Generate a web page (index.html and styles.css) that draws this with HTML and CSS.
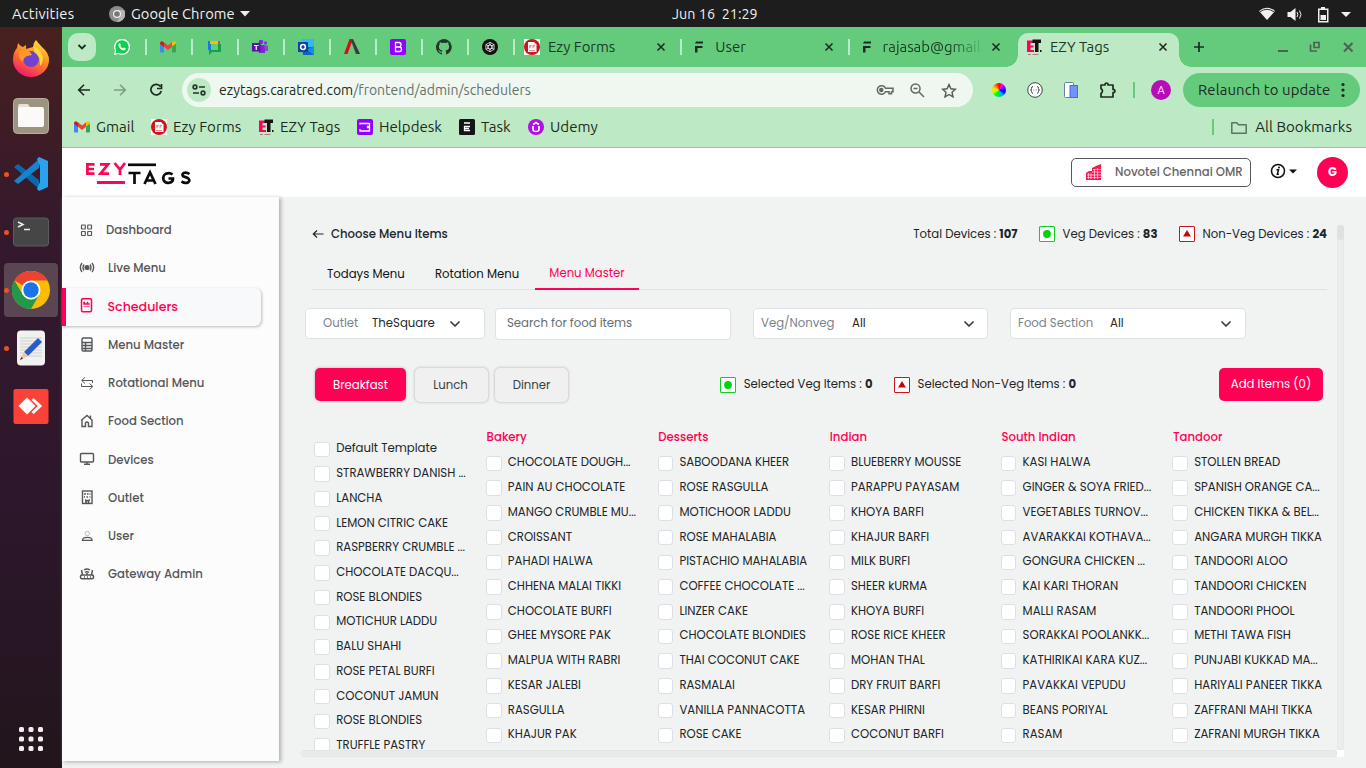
FILE: index.html
```html
<!DOCTYPE html>
<html lang="en">
<head>
<meta charset="utf-8">
<title>EZY Tags</title>
<link rel="stylesheet" href="styles.css">
</head>
<body>
<svg class="defs" width="0" height="0">
  <symbol id="gmail" viewBox="0 0 16 16"><path fill="#4285f4" d="M1 13.5h3V7L0 4v8.500q0 1 1 1z"/><path fill="#34a853" d="M12 13.500h3q1 0 1-1V4l-4 3z"/><path fill="#fbbc04" d="M12 3.500V7.500l4-3V4q-.5-2.500-2.500-1.500z"/><path fill="#c5221f" d="M0 4v1l4 3V3.500L2.500 2.500Q.5 1.800 0 4z"/><path fill="#ea4335" d="M4 3.300 8 6.500l4-3.200v4.400L8 11 4 7.700z"/></symbol>
  <symbol id="ezyforms" viewBox="0 0 16 16"><path fill="#fff" d="M0 0h16v16H0z"/><circle cx="8" cy="8" r="8" fill="#c9151b"/><path fill="#fff" d="M4 3h6l2.500 2.500V13H4z"/><path stroke="#e46a6e" fill="none" stroke-width=".8" d="M5.800 6v3.500m0-3.200h2m-2 1.500h1.500M9 6v3.500m0-3.200h2m-2 1.500h1.500M5 11.500h6"/></symbol>
  <symbol id="ezytags" viewBox="0 0 16 16"><path fill="#f5065a" d="M1 1.500h7V4H4.500v2.500h3v2h-3V11H8v2H1z"/><path fill="#151515" d="M6.500 .5H15V4h-2.500v9H9V4H6.500zM14 11h1.500v2H14z"/><path stroke="#b37a86" d="M2 15.500h3m1.500 0h6"/></symbol>
  <symbol id="effe" viewBox="0 0 16 16"><path fill="#1e2b25" d="M5 2.500h7v2H4zM4 7h7.500v2H6.500v4.500H4z"/></symbol>
  <symbol id="close" viewBox="0 0 10 10"><path d="m1.500 1.500 7 7m0-7-7 7" stroke="currentColor" stroke-width="1.600" fill="none"/></symbol>
  <symbol id="chev" viewBox="0 0 12 8"><path d="m2 2 4 4 4-4" stroke="#343a40" stroke-width="1.700" fill="none" stroke-linecap="round" stroke-linejoin="round"/></symbol>
  <symbol id="veg" viewBox="0 0 16 16"><rect x=".5" y=".5" width="15" height="15" rx=".5" fill="#fff" stroke="#12ce22"/><circle cx="8" cy="8" r="3.900" fill="#00d20c"/></symbol>
  <symbol id="nonveg" viewBox="0 0 16 16"><rect x=".5" y=".5" width="15" height="15" rx=".5" fill="#fff" stroke="#c9151b"/><path d="M8 4l4 6.500H4z" fill="#c80404"/></symbol>
</svg>

<div class="desktop">
<header class="topbar">
  <span class="activities">Activities</span>
  <svg class="app-ico" width="16" height="16" viewBox="0 0 16 16"><circle cx="8" cy="8" r="8" fill="#8d8d8d"/><path d="M8 4h7.200A8 8 0 0 1 8 16l3.500-6z" fill="#b5b5b5"/><circle cx="8" cy="8" r="4" fill="#eee"/><circle cx="8" cy="8" r="2.800" fill="#777"/></svg>
  <span class="app-name">Google Chrome</span>
  <svg width="10" height="6" viewBox="0 0 10 6"><path d="M0 0h10L5 5.500z" fill="#eee"/></svg>
  <span class="clock">Jun 16&nbsp; 21:29</span>
  <svg class="tray" width="92" height="20" viewBox="0 0 92 20"><g fill="#f0f0f0"><path d="M0 7q8-6.500 16 0l-8 9z"/><path d="M28.500 8h3l5-4v13l-5-4h-3z"/><path d="M59 4.500h3V3h4v1.500h3.500v14H59zm1.500 1.500v11H68V6z" fill-rule="evenodd"/><path d="M61.500 11H67v5h-5.500z"/><path d="M82 8h10l-5 5z"/></g><path d="M1 7.800q7-5 14 0" stroke="#333" fill="none"/><path d="M38 8q1.800 2.500 0 5M40.500 6.500q3 4 0 8" stroke="#eee" fill="none"/></svg>
</header>

<div class="work">
<nav class="dock">
  <div class="slot"><svg width="38" height="38" viewBox="0 0 38 38"><defs><linearGradient id="ff" x1=".8" y1="0" x2=".3" y2="1"><stop offset="0" stop-color="#ffe53b"/><stop offset=".45" stop-color="#ff8a1e"/><stop offset="1" stop-color="#f5156c"/></linearGradient></defs><path fill="url(#ff)" d="M24 1q2 3 6 7 7 6 7 13A18 17 0 0 1 1 21Q1 13 5 9l1-5q2 3 5 4l3-2 0 4 7-2Q21 4 24 1z"/><circle cx="19" cy="20" r="8" fill="#7142cf"/><path fill="#ff9a2a" d="M7 12q8-2 11 1l2 3-5 1q-4 2-4 6-5-3-4-11z"/><path fill="#ffd83a" d="M22 7q8 5 9 12 0 5-3 8 1-10-6-14z"/></svg></div>
  <div class="slot"><svg width="38" height="38" viewBox="0 0 38 38"><rect x="1.500" y="1.500" width="35" height="35" rx="4" fill="#9b9482" stroke="#b6b09e"/><path d="M6 12V9q0-2 2-2h8l2 3h13v20H6z" fill="#e5e1d8"/><rect x="6" y="10" width="26" height="20" rx="2.500" fill="#fbfaf8"/></svg></div>
  <div class="slot run"><svg width="38" height="38" viewBox="0 0 38 38"><path fill="#0c68ad" d="M2 12l4-3 21 16v9z"/><path fill="#1683ca" d="M2 26l4 3 21-16V4z"/><path fill="#2aa2ed" d="M27 2l9 4v26l-9 4-2-2 3-7V11l-3-7z"/></svg></div>
  <div class="slot run"><svg width="38" height="38" viewBox="0 0 38 38"><rect x="1.500" y="5" width="35" height="28" rx="3" fill="#464646" stroke="#5c5c5c"/><path d="m6 9 5 2.500L6 14m6 2.500h6" stroke="#eee" stroke-width="1.500" fill="none"/></svg></div>
  <div class="slot run active"><svg width="38" height="38" viewBox="0 0 38 38"><circle cx="19" cy="19" r="19" fill="#fbbc05"/><path d="M19 19 2.500 9.500A19 19 0 0 1 35.500 9.500H19z" fill="#ea4335"/><path d="M2.500 9.500 10.800 23.800 19 28.500 27.200 23.800 19 38A19 19 0 0 1 2.500 9.500z" fill="#23984b"/><circle cx="19" cy="19" r="9.500" fill="#fff"/><circle cx="19" cy="19" r="7.700" fill="#1a73e8"/></svg></div>
  <div class="slot run"><svg width="38" height="38" viewBox="0 0 38 38"><rect x="5" y="1.500" width="28" height="35" rx="4" fill="#f1f1f0"/><path d="M8 9h22M8 12h22M8 15h22M8 18h22M8 21h22M8 24h22M8 27h22" stroke="#cfcfcf"/><path d="m12 23 14-14 4 4-14 14z" fill="#295cc8"/><path d="m8 31 4-8 4 4z" fill="#edc9a0"/><path d="m8 31 1.500-3 1.500 1.500z" fill="#222"/></svg></div>
  <div class="slot"><svg width="38" height="38" viewBox="0 0 38 38"><rect x="1.500" y="2" width="35" height="35" rx="2" fill="#fb4238"/><path d="m6.500 19 8.500-8.500 8.500 8.500-8.500 8.500z" fill="#fff"/><path d="m20.500 12 7.500 7-7.500 7" stroke="#fff" stroke-width="3" fill="none"/></svg></div>
  <svg class="grid" width="24" height="24" viewBox="0 0 24 24" fill="#f0efee"><rect width="5" height="5" rx="1.500"/><rect x="9.500" width="5" height="5" rx="1.500"/><rect x="19" width="5" height="5" rx="1.500"/><rect y="9.500" width="5" height="5" rx="1.500"/><rect x="9.500" y="9.500" width="5" height="5" rx="1.500"/><rect x="19" y="9.500" width="5" height="5" rx="1.500"/><rect y="19" width="5" height="5" rx="1.500"/><rect x="9.500" y="19" width="5" height="5" rx="1.500"/><rect x="19" y="19" width="5" height="5" rx="1.500"/></svg>
</nav>

<div class="browser">
<div class="tabs">
  <button class="tabsearch"><svg width="10" height="8" viewBox="0 0 10 8"><path d="m1.500 2 3.500 3.500L8.500 2" stroke="#1c2b21" stroke-width="1.800" fill="none"/></svg></button>
  <div class="pin first"><svg width="16" height="16" viewBox="0 0 16 16"><path d="M0 16l1-4.500A8 8 0 1 1 4.500 15z" fill="#fff"/><circle cx="8" cy="8" r="6.700" fill="#0cd04e"/><path d="M1.300 14.700 2.500 11l2.500 2.700z" fill="#0cd04e"/><path d="M5.500 4.200q.8-.3 1.300 1.500L6.300 7q1 1.800 2.700 2.300l1-.9 1.900 1.200q-.4 2-2.400 1.800Q5 10.500 4.300 6q.3-1.400 1.200-1.800z" fill="#fff"/></svg></div>
  <div class="pin"><svg width="16" height="16"><use href="#gmail"/></svg></div>
  <div class="pin"><svg width="16" height="16" viewBox="0 0 16 16"><path fill="#1b74e8" d="M2 2h3v9H2z"/><path fill="#fbbc04" d="M4 2h8v3H4z"/><path fill="#ea4335" d="M12 2h2v3h-2z"/><path fill="#0fa44a" d="M12 5h3v8H6l-3 3v-5h9z"/><path fill="#64cb7c" d="M5 5h7v6H5z"/></svg></div>
  <div class="pin"><svg width="16" height="16" viewBox="0 0 16 16"><circle cx="9" cy="3" r="2.300" fill="#7a30d8"/><circle cx="13.500" cy="4" r="1.700" fill="#8a35e0"/><path fill="#7a28c8" d="M5 6h8v8H7z"/><path fill="#9440e0" d="M12 6.500h4V12h-3z"/><path fill="#5a14a8" d="M0 4h8.500v8.500H0z"/><path d="M2 6.500h4.500M4.250 6.500V11" stroke="#fff" stroke-width="1.200"/></svg></div>
  <div class="pin"><svg width="16" height="16" viewBox="0 0 16 16"><path fill="#35b8f1" d="M4 0h12v9H4z"/><path fill="#1066b5" d="M4 8h12v8H5z"/><path fill="#1390e0" d="M16 7v9l-7-5z"/><path fill="#123fa7" d="M0 3h10v10H0z"/><circle cx="5" cy="8" r="2.400" fill="none" stroke="#fff" stroke-width="1.500"/></svg></div>
  <div class="pin"><svg width="16" height="16" viewBox="0 0 16 16"><path fill="#d31018" d="M5.500 0H9L3.500 15H0z"/><path fill="#3b3b3b" d="M7 1.500 9 0l7 15h-4z"/></svg></div>
  <div class="pin"><svg width="16" height="16" viewBox="0 0 16 16"><rect width="16" height="16" rx="2" fill="#8f00ff"/><path d="M5.500 3.500h3.500q2 0 2 2.200T9 8H5.500zM5.500 8h4q2 0 2 2.300t-2 2.200h-4z" fill="none" stroke="#fff" stroke-width="1.300"/></svg></div>
  <div class="pin"><svg width="16" height="16" viewBox="0 0 16 16"><path fill="#24352c" d="M8 0a8 8 0 0 0-2.530 15.590c.4.070.55-.17.55-.38v-1.490C3.800 14.200 3.330 12.650 3.330 12.650c-.36-.92-.89-1.170-.89-1.170-.73-.5.060-.49.060-.49.800.060 1.230.820 1.230.820.710 1.220 1.870.870 2.330.670.070-.52.280-.87.500-1.070C4.780 11.200 2.920 10.520 2.920 7.460c0-.87.310-1.590.820-2.150-.080-.2-.360-1.020.080-2.120 0 0 .67-.21 2.200.82a7.600 7.600 0 0 1 4 0c1.530-1.040 2.200-.82 2.200-.82.440 1.100.16 1.920.080 2.120.510.560.820 1.270.820 2.150 0 3.070-1.870 3.750-3.650 3.950.290.250.540.730.540 1.480v2.200c0 .210.150.460.550.380A8 8 0 0 0 8 0z"/></svg></div>
  <div class="pin last"><svg width="16" height="16" viewBox="0 0 16 16"><circle cx="8" cy="8" r="8" fill="#111"/><g fill="none" stroke="#eee" stroke-width=".8"><path d="M8 3.300 12.100 5.650v4.700L8 12.700 3.900 10.350v-4.700z"/><path d="M8 5.700 10 6.850v2.300L8 10.300 6 9.150v-2.300zM8 3.300v2.400l-2 1.150M12.100 5.650 10 6.850 8 5.700M12.100 10.350 10 9.150v-2.300M8 12.700v-2.400l2-1.150M3.900 10.350 6 9.150l2 1.150M3.900 5.650 6 6.850v2.300"/></g></svg></div>
  <div class="tab"><svg width="16" height="16"><use href="#ezyforms"/></svg><span>Ezy Forms</span><svg class="x" width="10" height="10"><use href="#close"/></svg></div>
  <div class="tab"><svg width="16" height="16"><use href="#effe"/></svg><span>User</span><svg class="x" width="10" height="10"><use href="#close"/></svg></div>
  <div class="tab before-on"><svg width="16" height="16"><use href="#effe"/></svg><span class="fade">rajasab@gmail</span><svg class="x" width="10" height="10"><use href="#close"/></svg></div>
  <div class="tab on"><svg width="16" height="16"><use href="#ezytags"/></svg><span>EZY Tags</span><svg class="x" width="10" height="10"><use href="#close"/></svg></div>
  <svg class="plus" width="12" height="12" viewBox="0 0 12 12"><path d="M6 1v10M1 6h10" stroke="#1f2a22" stroke-width="1.700"/></svg>
  <svg class="win" width="76" height="12" viewBox="0 0 76 12" fill="none" stroke="#4c6353" stroke-width="2"><path d="M0 10h10"/><path d="M36 1.500h5v5h-5zM32.500 3.500v6.500h6.500" stroke-width="1.700"/><path d="m66 2 8.500 8.500m0-8.500L66 10.500"/></svg>
</div>

<div class="toolbar">
  <svg class="navs" width="88" height="16" viewBox="0 0 88 16" fill="none" stroke-width="1.600"><path d="M13 8H2m5-5.300L1.700 8 7 13.300" stroke="#1f2a22"/><path d="M37 8h11m-5-5.300L48.300 8 43 13.300" stroke="#7b9d82"/><path d="M83.500 4.500A5.300 5.300 0 1 0 84.300 9M84.500 2v4.500H80" stroke="#1f2a22" stroke-width="1.700"/></svg>
  <div class="omni">
    <span class="site"><svg width="14" height="12" viewBox="0 0 14 12" fill="none" stroke="#26352a" stroke-width="1.600"><circle cx="3" cy="3" r="1.900"/><path d="M7 3h6M1 9h6"/><circle cx="11" cy="9" r="1.900"/></svg></span>
    <span class="url">ezytags.caratred.com<b>/frontend/admin/schedulers</b></span>
    <svg width="18" height="12" viewBox="0 0 18 12" fill="none" stroke="#5f6b63" stroke-width="1.500"><path d="M9.500 4.200A4.300 4.300 0 1 0 9.500 7.800H13v2h2.500v-2H17V4.200z"/><circle cx="5.300" cy="6" r="1.500" fill="#5f6b63"/></svg>
    <svg width="15" height="15" viewBox="0 0 15 15" fill="none" stroke="#5f6b63" stroke-width="1.500"><circle cx="5.500" cy="5.500" r="4.500"/><path d="m9 9 5 5M3.500 5.500h4"/></svg>
    <svg width="16" height="15" viewBox="0 0 16 15"><path d="m8 1.500 1.900 4.300 4.600.4-3.500 3.100 1 4.600L8 11.500l-4 2.400 1-4.600L1.500 6.200l4.600-.4z" fill="none" stroke="#4d5b51" stroke-width="1.400"/></svg>
  </div>
  <i class="wheel"></i>
  <svg class="e2" width="16" height="16" viewBox="0 0 16 16" fill="none" stroke="#444"><circle cx="8" cy="8" r="7.300" fill="#fff"/><path d="M6 4.500Q4.500 4.500 4.500 6.500T3.500 8q1 0 1 1.500T6 11.500M10 4.500q1.500 0 1.500 2t1 1.500q-1 0-1 1.500T10 11.500M6.500 8h.8m1.500 0h.8"/></svg>
  <svg class="e3" width="14" height="16" viewBox="0 0 14 16"><rect x=".5" y=".5" width="9" height="15" rx="1" fill="#fff" stroke="#708099"/><rect x="6" y="3.500" width="7.500" height="12" fill="#6f94ff" stroke="#4d6bd8"/></svg>
  <svg class="e4" width="18" height="18" viewBox="0 0 18 18"><path d="M2 4h4V3q1.500-2 3 0v1h5v4.500h1q2 1.500 0 3h-1V16H2v-3.500q3-2.500 0-5z" fill="none" stroke="#1f2a22" stroke-width="1.700" stroke-linejoin="round"/></svg>
  <i class="bar"></i>
  <span class="me">A</span>
  <button class="relaunch"><span>Relaunch to update</span><svg width="4" height="16" viewBox="0 0 4 16" fill="#1f2a22"><circle cx="2" cy="2.500" r="1.600"/><circle cx="2" cy="8" r="1.600"/><circle cx="2" cy="13.500" r="1.600"/></svg></button>
</div>

<div class="bookmarks">
  <span class="bm b1"><svg width="16" height="16"><use href="#gmail"/></svg><span>Gmail</span></span>
  <span class="bm b2"><svg width="16" height="16"><use href="#ezyforms"/></svg><span>Ezy Forms</span></span>
  <span class="bm b3"><svg width="16" height="16"><use href="#ezytags"/></svg><span>EZY Tags</span></span>
  <span class="bm b4"><svg width="16" height="16" viewBox="0 0 16 16"><rect width="16" height="16" rx="2" fill="#8f00ff"/><path d="M3 5.500V4.500h9.500v3h-2v1h2v3.500H3v-2" fill="none" stroke="#fff" stroke-width="1.300"/></svg><span>Helpdesk</span></span>
  <span class="bm b5"><svg width="16" height="16" viewBox="0 0 16 16"><rect width="16" height="16" rx="1.500" fill="#151515"/><path d="M5 4h6M11 7.500H5.500v4H11M5.500 9.500H10" fill="none" stroke="#fff" stroke-width="1.300"/></svg><span>Task</span></span>
  <span class="bm b6"><svg width="16" height="16" viewBox="0 0 16 16"><circle cx="8" cy="8" r="8" fill="#b10de8"/><path d="M5 7v3.500q0 2 3 2t3-2V7M5 5.500 8 3.500l3 2" fill="none" stroke="#fff" stroke-width="1.600"/></svg><span>Udemy</span></span>
  <i class="bar"></i>
  <span class="bm all"><svg width="16" height="13" viewBox="0 0 16 13"><path d="M.8 11V1.800h5l1.700 2h7.700v8.400H.8z" fill="none" stroke="#5b7462" stroke-width="1.500" stroke-linejoin="round"/></svg><span>All Bookmarks</span></span>
</div>

<div class="page">
<header class="head">
  <svg class="logo" width="106" height="24" viewBox="0 0 106 24" fill="none" stroke-width="2.700"><g stroke="#fb0655"><path d="M9.500 2.400H2.400v9.200h7.100M2.400 7H9M15 2.400h8l-7.500 9.200H24M29.500 1l5.500 6.500L40 1M35 7v6"/><path d="M12 20.500h28" stroke-width="3"/></g><g stroke="#0b0b0b"><path d="M43 2.800h28"/><path d="M43.500 11h12M49.500 10v12M59.500 22 65 10.500 70.500 22M61.500 18.500h7"/><path d="M87.500 12.500q-3-2.500-6.500-.8-3.500 2-2.500 6 1.500 4 6 3 3.500-.5 3.500-4.200h-4.500M104.500 12q-3-2-6-.9-2 1.400-.2 3.200l4.400 1.700q3 2.300.6 4.300-3.300 1.700-6.800-.9"/></g></svg>
  <div class="hotel"><svg width="16" height="16" viewBox="0 0 16 16"><path d="M0 16V9l3-2h3V4l5-2.500L15 0v16z" fill="#f41c50"/><path d="M2.500 9v6M5 9v6M8.500 5v10M11.500 4v11M1 11h14M1 13.500h14M6 8h9M7 5.500h8" stroke="#fff" stroke-width=".6"/></svg><span>Novotel Chennai OMR</span></div>
  <svg class="info" width="28" height="16" viewBox="0 0 28 16"><circle cx="8" cy="8" r="6.500" fill="none" stroke="#111" stroke-width="1.500"/><path d="M6.500 6.800h2L7.300 11.300h1.600" fill="none" stroke="#111" stroke-width="1.500"/><circle cx="9" cy="4.400" r="1" fill="#111"/><path d="M19 6.500h8l-4 4z" fill="#111"/></svg>
  <span class="avatar">G</span>
</header>

<div class="body">
<aside class="side">
  <a class="s1"><svg width="16" height="16" viewBox="0 0 16 16" fill="none" stroke="currentColor" stroke-width="1.200"><rect x="2.500" y="2" width="3.800" height="4" rx=".5"/><rect x="8.700" y="2" width="3.800" height="4" rx=".5"/><rect x="2.500" y="8.500" width="3.800" height="4" rx=".5"/><rect x="8.700" y="8.500" width="3.800" height="4" rx=".5"/></svg>Dashboard</a>
  <a><svg width="16" height="16" viewBox="0 0 16 16" fill="none" stroke="currentColor" stroke-width="1.400"><circle cx="8" cy="6.500" r="1.900" fill="currentColor"/><path d="M5 3.500q-2 3 0 6M11 3.500q2 3 0 6M3 2q-3.300 4.500 0 9M13 2q3.300 4.500 0 9"/></svg>Live Menu</a>
  <a class="on"><svg width="16" height="16" viewBox="0 0 16 16" fill="none" stroke="currentColor" stroke-width="1.500"><rect x="2.500" y=".7" width="10" height="13" rx="1.500"/><path d="M4.500 6.500V4H6v1.500h2V4h1v1.500h1.500v1z" fill="currentColor" stroke-width=".5"/><path d="M4.500 8.500h6" stroke-width=".6"/></svg>Schedulers</a>
  <a><svg width="16" height="16" viewBox="0 0 16 16" fill="none" stroke="currentColor" stroke-width="1.400"><rect x="3" y="1" width="10" height="13" rx="1.200"/><path d="M3 5.500h10M3 8.500h10M3 11.500h10M6.500 5.500V14"/></svg>Menu Master</a>
  <a><svg width="16" height="16" viewBox="0 0 16 16" fill="none" stroke="currentColor"><path d="M13.500 7V4.500H3m3-3.200L2.700 4.500 6 7.500M2.500 7.500v3h11m-3-3 3.300 3-3.300 3.200"/></svg>Rotational Menu</a>
  <a><svg width="16" height="16" viewBox="0 0 16 16" fill="none" stroke="currentColor" stroke-width="1.400"><path d="m2 6.500 6-5 5.500 5M3 6v6.500h3.500V9q1.500-2 3 0v3.500H13V6M11.500 4V1.500"/></svg>Food Section</a>
  <a><svg width="16" height="16" viewBox="0 0 16 16" fill="none" stroke="currentColor" stroke-width="1.400"><rect x="1.500" y="1.500" width="13" height="8.500" rx="1"/><path d="M8 10v2M5 12.200h6"/></svg>Devices</a>
  <a><svg width="16" height="16" viewBox="0 0 16 16" fill="none" stroke="currentColor" stroke-width="1.400"><rect x="3.500" y="1" width="9.500" height="12.500"/><path d="M5 4h2m1 0h1.500m1 0h1M5 7h1m1.500 0H9m1.500 0h1M6 10h1m3 0h1M7 13v-2.500h2.500V13" stroke-width="1.700"/></svg>Outlet</a>
  <a><svg width="16" height="16" viewBox="0 0 16 16" fill="none" stroke="currentColor"><circle cx="8.300" cy="4.500" r="2.200" stroke="#aaa" stroke-width=".8"/><path d="M3.500 11.300q0-3 4.800-3t4.800 3z" stroke-width="1.300"/></svg>User</a>
  <a><svg width="16" height="16" viewBox="0 0 16 16" fill="none" stroke="currentColor" stroke-width="1.500"><rect x="1.500" y="8" width="13" height="3.800" rx="1.500"/><path d="M3.500 8l-1-5M12.500 8l1-5M5 3q3-2 6 0M6 5.500q2-1.500 4 0M8 6v2M5 10h1m2 0h1m2 0h1"/></svg>Gateway Admin</a>
</aside>

<main class="main">
  <div class="title">
    <svg width="12" height="10" viewBox="0 0 12 10"><path d="M11.500 5H1m4-3.500L1.300 5 5 8.500" fill="none" stroke="#212529" stroke-width="1.200"/></svg>
    <h1>Choose Menu Items</h1>
    <span class="stat">Total Devices : <b>107</b></span>
    <svg class="v" width="16" height="16"><use href="#veg"/></svg><span class="stat">Veg Devices : <b>83</b></span>
    <svg class="v" width="16" height="16"><use href="#nonveg"/></svg><span class="stat">Non-Veg Devices : <b>24</b></span>
  </div>
  <div class="menu-tabs"><span class="t1">Todays Menu</span><span class="t2">Rotation Menu</span><span class="t3">Menu Master</span></div>
  <div class="filters">
    <div class="sel outlet"><em>Outlet</em><span>TheSquare</span><svg width="12" height="8"><use href="#chev"/></svg></div>
    <div class="sel search">Search for food items</div>
    <div class="sel vn"><em>Veg/Nonveg</em><span>All</span><svg width="12" height="8"><use href="#chev"/></svg></div>
    <div class="sel fs"><em>Food Section</em><span>All</span><svg width="12" height="8"><use href="#chev"/></svg></div>
  </div>
  <div class="meals">
    <button class="meal cur">Breakfast</button><button class="meal lunch">Lunch</button><button class="meal dinner">Dinner</button>
    <div class="picked"><svg width="16" height="16"><use href="#veg"/></svg><span>Selected Veg Items : <b>0</b></span><svg class="nv" width="16" height="16"><use href="#nonveg"/></svg><span>Selected Non-Veg Items : <b>0</b></span></div>
    <button class="add">Add Items (0)</button>
  </div>
  <div class="lists">
    <ul class="nohead"><li>Default Template<li>STRAWBERRY DANISH ...<li>LANCHA<li>LEMON CITRIC CAKE<li>RASPBERRY CRUMBLE ...<li>CHOCOLATE DACQU...<li>ROSE BLONDIES<li>MOTICHUR LADDU<li>BALU SHAHI<li>ROSE PETAL BURFI<li>COCONUT JAMUN<li>ROSE BLONDIES<li>TRUFFLE PASTRY</ul>
    <ul><h2>Bakery</h2><li>CHOCOLATE DOUGH...<li>PAIN AU CHOCOLATE<li>MANGO CRUMBLE MU...<li>CROISSANT<li>PAHADI HALWA<li>CHHENA MALAI TIKKI<li>CHOCOLATE BURFI<li>GHEE MYSORE PAK<li>MALPUA WITH RABRI<li>KESAR JALEBI<li>RASGULLA<li>KHAJUR PAK</ul>
    <ul><h2>Desserts</h2><li>SABOODANA KHEER<li>ROSE RASGULLA<li>MOTICHOOR LADDU<li>ROSE MAHALABIA<li>PISTACHIO MAHALABIA<li>COFFEE CHOCOLATE ...<li>LINZER CAKE<li>CHOCOLATE BLONDIES<li>THAI COCONUT CAKE<li>RASMALAI<li>VANILLA PANNACOTTA<li>ROSE CAKE</ul>
    <ul><h2>Indian</h2><li>BLUEBERRY MOUSSE<li>PARAPPU PAYASAM<li>KHOYA BARFI<li>KHAJUR BARFI<li>MILK BURFI<li>SHEER kURMA<li>KHOYA BURFI<li>ROSE RICE KHEER<li>MOHAN THAL<li>DRY FRUIT BARFI<li>KESAR PHIRNI<li>COCONUT BARFI</ul>
    <ul><h2>South Indian</h2><li>KASI HALWA<li>GINGER &amp; SOYA FRIED...<li>VEGETABLES TURNOV...<li>AVARAKKAI KOTHAVA...<li>GONGURA CHICKEN ...<li>KAI KARI THORAN<li>MALLI RASAM<li>SORAKKAI POOLANKK...<li>KATHIRIKAI KARA KUZ...<li>PAVAKKAI VEPUDU<li>BEANS PORIYAL<li>RASAM</ul>
    <ul><h2>Tandoor</h2><li>STOLLEN BREAD<li>SPANISH ORANGE CA...<li>CHICKEN TIKKA &amp; BEL...<li>ANGARA MURGH TIKKA<li>TANDOORI ALOO<li>TANDOORI CHICKEN<li>TANDOORI PHOOL<li>METHI TAWA FISH<li>PUNJABI KUKKAD MA...<li>HARIYALI PANEER TIKKA<li>ZAFFRANI MAHI TIKKA<li>ZAFRANI MURGH TIKKA</ul>
  </div>
  <div class="hscroll"></div>
</main>
<div class="vscroll"><div class="track"><i></i></div><div class="corner"></div></div>
</div>
</div>
</div>
</div>
</div>
</body>
</html>
```

FILE: styles.css
```css
* { box-sizing: border-box; }
html, body { margin: 0; height: 100%; overflow: hidden; }
body { font-family: Poppins, Inter, sans-serif; font-size: 11.700px; color: #212529; }
svg { flex: none; display: block; }
.defs { position: absolute; }
button { font: inherit; border: 0; padding: 0; margin: 0; white-space: nowrap; flex: none; }
span, a, em, li, h1, h2 { white-space: nowrap; }
em { font-style: normal; }
i { flex: none; }

.desktop { width: 1366px; height: 768px; display: flex; flex-direction: column; overflow: hidden; }
.topbar { height: 27px; background: #1d1d1d; color: #f0f0f0; display: flex; align-items: center; font-family: Ubuntu, "Noto Sans", sans-serif; font-size: 14.700px; padding: 0 15px 0 12px; flex: none; }
.activities { width: 97px; letter-spacing: .2px; }
.app-name { margin: 0 5px 0 6px; width: 104px; letter-spacing: .05px; }
.clock { margin-left: 422px; font-size: 14.300px; letter-spacing: .05px; }
.tray { margin-left: auto; }

.work { flex: 1; display: flex; min-height: 0; }
.dock { width: 62px; flex: none; background: linear-gradient(#48201f 0, #35192c 26%, #2e172d 60%, #22151c 100%); display: flex; flex-direction: column; align-items: center; padding-top: 4px; }
.slot { width: 54px; height: 54px; margin-bottom: 4px; border-radius: 4px; display: flex; align-items: center; justify-content: center; position: relative; flex: none; }
.slot.active { background: #5a4553; }
.slot.run::before { content: ""; position: absolute; left: 0; top: 25px; width: 5px; height: 5px; border-radius: 50%; background: #e95420; }
.grid { margin-top: auto; margin-bottom: 17px; }

.browser { flex: 1; min-width: 0; display: flex; flex-direction: column; background: #bdeac4; }
.tabs { height: 40px; flex: none; background: #64cb7c; display: flex; align-items: center; padding-left: 6px; font-family: Ubuntu, "Noto Sans", sans-serif; font-size: 14.900px; color: #1b3a25; }
.tabsearch { width: 28px; height: 28px; border-radius: 10px; background: #bdeac4; display: flex; align-items: center; justify-content: center; }
.pin { width: 46px; height: 40px; display: flex; align-items: center; padding-left: 15px; position: relative; flex: none; }
.pin.first { width: 49px; padding-left: 18px; }
.pin::after, .tab:not(.on)::after { content: ""; position: absolute; right: -2px; top: 12px; width: 2px; height: 16px; background: #bdeac4; }
.tab { width: 167.300px; height: 40px; display: flex; align-items: center; position: relative; padding: 0 14px 0 11px; flex: none; }
.tab span { margin-left: 8px; flex: 1; min-width: 0; padding-bottom: 2px; }
.tab .x { margin-left: 4px; color: #1f2a22; }
.tab.on { width: 161px; height: 34px; align-self: flex-end; margin-left: 3px; background: #bdeac4; border-radius: 10px 10px 0 0; padding: 0 11px 6px 8px; }
.tab.on::before, .tab.on::after { content: ""; position: absolute; bottom: 0; width: 12px; height: 12px; background: radial-gradient(circle at 0 0, transparent 11.500px, #bdeac4 12px); }
.tab.on::before { left: -12px; }
.tab.on::after { right: -12px; background: radial-gradient(circle at 100% 0, transparent 11.500px, #bdeac4 12px); }
.tab.before-on::after { display: none; }
.fade { overflow: hidden; -webkit-mask: linear-gradient(90deg, #000 65%, transparent 98%); mask: linear-gradient(90deg, #000 65%, transparent 98%); }
.plus { margin-left: 14px; }
.win { margin-left: auto; margin-right: 12px; }

.toolbar { height: 46px; flex: none; display: flex; align-items: center; font-family: Ubuntu, "Noto Sans", sans-serif; font-size: 14px; color: #1f2a22; background: #bdeac4; padding-left: 15px; }
.omni { margin-left: 17px; width: 791px; height: 34px; border-radius: 17px; background: #eef8f0; display: flex; align-items: center; padding: 0 16px 0 5px; flex: none; }
.omni svg + svg { margin-left: 16px; }
.site { width: 24px; height: 24px; border-radius: 50%; background: #bdeac4; display: flex; align-items: center; justify-content: center; }
.url { margin-left: 8px; flex: 1; }
.url b { font-weight: 400; color: #66716a; }
.wheel { width: 14px; height: 14px; margin-left: 19px; border-radius: 50%; background: conic-gradient(#f00, #f0f, #50f, #00f, #0af, #0d7, #0f0, #cf0, #fd0, #f70, #f00); }
.e2 { margin-left: 21px; } .e3 { margin-left: 21px; } .e4 { margin-left: 21px; }
.bar { width: 2px; height: 16px; background: #64cb7c; margin-left: 16px; }
.me { width: 20px; height: 20px; border-radius: 50%; background: #b80cb8; color: #fff; font-size: 11px; line-height: 20px; text-align: center; margin-left: 16px; flex: none; }
.relaunch { width: 177px; height: 34px; border-radius: 17px; background: #64cb7c; margin-left: 12px; display: flex; align-items: center; justify-content: space-between; padding: 0 15px; color: #1f2a22; font-size: 14.900px; }
.relaunch span { padding-bottom: 2px; letter-spacing: .1px; }

.bookmarks { height: 35px; flex: none; border-bottom: 1px solid #9dbda3; display: flex; padding: 0 14px 6px 12px; align-items: center; font-family: Ubuntu, "Noto Sans", sans-serif; font-size: 15.100px; color: #1f2a22; }
.bm { display: flex; align-items: center; gap: 6px; flex: none; height: 22px; }
.bm span { padding-bottom: 2px; }
.b1 { width: 77px; } .b2 { width: 107px; } .b3 { width: 99px; } .b4 { width: 102px; } .b5 { width: 69px; }
.bookmarks .bar { margin-left: auto; margin-right: 17px; }
.all { gap: 8px; }

.page { flex: 1; min-height: 0; display: flex; flex-direction: column; background: #f1f3f2; }
.head { height: 49px; background: #fff; flex: none; display: flex; align-items: center; padding-left: 23px; padding-right: 18px; }
.logo { margin-top: 3px; }
.hotel { margin-left: auto; width: 180px; height: 29px; border: 1px solid #55595c; border-radius: 5px; display: flex; align-items: center; padding: 0 0 1px 14px; color: #666; }
.hotel span { margin-left: 13px; font-weight: 500; }
.info { margin-left: 19px; margin-top: -3px; }
.avatar { width: 31px; height: 31px; border-radius: 50%; background: #ff0055; color: #fff; font-weight: 700; text-align: center; line-height: 31px; margin-left: 19px; }

.body { flex: 1; display: flex; min-height: 0; }
.side { width: 217px; height: 564px; background: #fcfcfc; box-shadow: 2px 1px 4px #aaaeac; padding-top: 14.400px; flex: none; color: #545759; font-weight: 500; }
.side a { height: 38.250px; display: flex; align-items: center; padding-left: 17px; }
.side svg { margin-right: 13px; }
.side .s1 svg { margin-right: 11px; }
.side .on { width: 199px; background: #f8f9fb; border-left: 4px solid #ff0055; color: #ff0055; border-radius: 0 6px 6px 0; box-shadow: 1px 1px 3px #bbb; padding-left: 13px; font-size: 12.600px; }
.side .on svg { margin: -3px 12.500px 0 0; }

.main { width: 1036px; margin-left: 22px; display: flex; flex-direction: column; padding-top: 25px; flex: none; }
.title { display: flex; align-items: center; height: 24px; padding: 0 10px 0 11px; }
.title h1 { margin: 0 auto 0 7px; font-size: 11.700px; font-weight: 500; }
.title .v { margin-left: 21.300px; }
.title .stat { margin-left: 7.700px; }
b { font-weight: 700; }
.menu-tabs { height: 44px; margin: 0 10px 0 11px; border-bottom: 1px solid #dee2e6; display: flex; line-height: 57px; color: #111; flex: none; }
.t1 { width: 108px; padding-left: 15px; } .t2 { width: 115px; padding-left: 15px; }
.t3 { width: 104px; height: 44px; border-bottom: 2px solid #ff0055; text-align: center; color: #ff0055; line-height: 55px; }
.filters { display: flex; margin: 18px 0 0 4px; height: 32px; align-items: flex-start; flex: none; }
.sel { height: 31px; background: #fff; border: 1px solid #dee2e6; border-radius: 4px; display: flex; align-items: center; flex: none; color: #24282c; }
.sel em { color: #7a838b; }
.outlet { width: 180px; padding-left: 17px; } .outlet em { width: 49px; } .outlet span { width: 77px; }
.search { width: 236px; height: 32px; margin-left: 10px; padding: 0 0 1px 11px; color: #666c72; }
.vn { width: 235px; margin-left: 22px; padding-left: 7px; } .vn em { width: 91px; } .vn span { width: 111px; }
.fs { width: 236px; margin-left: 22px; padding-left: 7px; } .fs em { width: 92px; } .fs span { width: 110px; }
.meals { display: flex; margin: 27px 0 0 14px; height: 35px; align-items: center; flex: none; }
.meal { height: 34px; width: 73px; background: #f0f0f0; border-radius: 5px; box-shadow: 0 0 3px #aaa; color: #3a3e42; padding-top: 1px; }
.meal.cur { width: 91px; height: 33px; background: #ff0055; color: #fff; }
.lunch { margin-left: 9px; padding-right: 2px; } .dinner { margin-left: 7px; }
.picked { display: flex; align-items: center; margin-left: 152px; width: 499px; }
.picked span { margin: -1px 0 0 7.700px; } .picked .nv { margin-left: 21.300px; }
.add { width: 104px; height: 33px; border-radius: 5px; background: #ff0055; color: #fff; padding-bottom: 1px; }
.lists { display: flex; margin: 22px 0 0 13px; padding-left: 1px; height: 326px; overflow: hidden; flex: none; }
ul { list-style: none; margin: 0; padding: 0; width: 171.600px; flex: none; }
ul.nohead { padding-top: 12.500px; }
h2 { margin: 0; font-size: 11.700px; font-weight: 500; color: #ff0055; height: 26.600px; line-height: 26px; }
li { height: 24.720px; display: flex; align-items: center; }
li::before { content: ""; width: 13.500px; height: 13.500px; margin: 0 6.300px 0 -.6px; border: 1px solid #dce0e5; border-radius: 3px; background: #fff; flex: none; position: relative; top: .5px; }
.hscroll { height: 7px; background: #e9ebea; border: 1px solid #e4e6e5; border-radius: 3px; width: 1036px; flex: none; }
.vscroll { width: 7px; margin-top: 28px; flex: none; }
.track { height: 525px; background: #ebedec; border: 1px solid #e6e8e7; border-top: 0; border-radius: 3px; }
.track i { display: block; height: 15px; margin: 0 -1px; background: #dfe0e0; border-radius: 3px; }
.corner { height: 7px; background: #fff; }
```
